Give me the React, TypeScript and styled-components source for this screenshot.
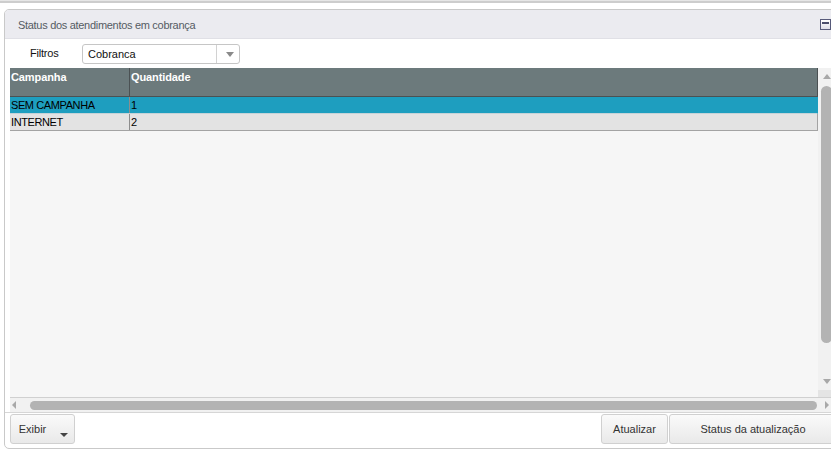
import React from 'react';
import styled, { createGlobalStyle } from 'styled-components';

interface RowData {
  campanha: string;
  quantidade: number;
}

const rows: RowData[] = [
  { campanha: 'SEM CAMPANHA', quantidade: 1 },
  { campanha: 'INTERNET', quantidade: 2 },
];

const GlobalStyle = createGlobalStyle`
  html, body {
    margin: 0;
    padding: 0;
    background: #ffffff;
  }
  body {
    font-family: "Liberation Sans", Arial, sans-serif;
    font-size: 11px;
    color: #222;
  }
`;

const App: React.FunctionComponent = () => {
  return (
    <Page>
      <GlobalStyle />
      <TopStrip />
      <Panel>
        <PanelHeader>
          <PanelTitle>Status dos atendimentos em cobrança</PanelTitle>
          <MinimizeButton>
            <MinimizeBar />
          </MinimizeButton>
        </PanelHeader>

        <FilterRow>
          <FilterLabel>Filtros</FilterLabel>
          <SelectBox>
            <SelectValue>Cobranca</SelectValue>
            <SelectArrow>
              <Triangle direction="down" color="#8a8a8a" />
            </SelectArrow>
          </SelectBox>
        </FilterRow>

        <GridArea>
          <TableArea>
            <HeaderRow>
              <HeaderCell>Campanha</HeaderCell>
              <HeaderCell>Quantidade</HeaderCell>
            </HeaderRow>
            {rows.map((row, i) => (
              <DataRow key={row.campanha} selected={i === 0}>
                <DataCell>{row.campanha}</DataCell>
                <DataCell>{row.quantidade}</DataCell>
              </DataRow>
            ))}
          </TableArea>

          <VScroll>
            <ArrowBox>
              <Triangle direction="up" color="#a8a8a8" />
            </ArrowBox>
            <VTrack>
              <VThumb />
            </VTrack>
            <ArrowBox>
              <Triangle direction="down" color="#a8a8a8" />
            </ArrowBox>
            <ScrollCorner />
          </VScroll>

          <HScroll>
            <HArrowBox>
              <Triangle direction="left" color="#a8a8a8" />
            </HArrowBox>
            <HTrack>
              <HThumb />
            </HTrack>
            <HArrowBox>
              <Triangle direction="right" color="#a8a8a8" />
            </HArrowBox>
          </HScroll>
        </GridArea>

        <ButtonBar>
          <ToolButton width={65}>
            <ButtonText>Exibir</ButtonText>
            <CaretWrap>
              <Triangle direction="down" color="#444" />
            </CaretWrap>
          </ToolButton>
          <Spacer />
          <ToolButton width={67}>Atualizar</ToolButton>
          <ToolButton width={168}>Status da atualização</ToolButton>
        </ButtonBar>
      </Panel>
    </Page>
  );
};

const Page = styled.div`
  width: 831px;
  height: 454px;
  overflow: hidden;
`;

const TopStrip = styled.div`
  height: 3px;
  box-sizing: border-box;
  border-top: 1px solid #e6e6e6;
  background: #cdcdcd;
`;

const Panel = styled.div`
  margin: 6px 0 0 4px;
  width: 840px;
  height: 440px;
  box-sizing: border-box;
  border: 1px solid #c9c9c9;
  border-radius: 5px;
  display: flex;
  flex-direction: column;
  overflow: hidden;
`;

const PanelHeader = styled.div`
  height: 29px;
  box-sizing: border-box;
  display: flex;
  align-items: center;
  padding: 0 12px 0 13px;
  background: #ebebf0;
  border-bottom: 1px solid #e0e0e6;
`;

const PanelTitle = styled.div`
  flex: 1;
  color: #555b63;
  font-size: 11px;
  letter-spacing: -0.3px;
  padding-top: 1px;
`;

const MinimizeButton = styled.div`
  width: 11px;
  height: 11px;
  box-sizing: border-box;
  border: 1px solid #575a7a;
  background: linear-gradient(#ffffff, #dedee8);
  padding: 2px 1px 0;
  margin-top: 1px;
`;

const MinimizeBar = styled.div`
  height: 2px;
  background: #4a4d6c;
`;

const FilterRow = styled.div`
  height: 29px;
  box-sizing: border-box;
  display: flex;
  align-items: flex-start;
  padding: 5px 0 0 25px;
`;

const FilterLabel = styled.div`
  width: 52px;
  line-height: 19px;
  color: #111;
  letter-spacing: -0.2px;
`;

const SelectBox = styled.div`
  width: 158px;
  height: 20px;
  box-sizing: border-box;
  border: 1px solid #c6c6c6;
  border-radius: 3px;
  display: flex;
  background: #fff;
`;

const SelectValue = styled.div`
  flex: 1;
  padding-left: 5px;
  line-height: 18px;
  color: #111;
`;

const SelectArrow = styled.div`
  width: 23px;
  border-left: 1px solid #d2d2d2;
  display: flex;
  align-items: center;
  justify-content: center;
  padding-left: 3px;
  box-sizing: border-box;
`;

const GridArea = styled.div`
  margin-left: 5px;
  width: 825px;
  height: 344px;
  display: grid;
  grid-template-columns: 808px 17px;
  grid-template-rows: 329px 15px;
`;

const TableArea = styled.div`
  background: #f6f6f6;
  display: flex;
  flex-direction: column;
`;

const HeaderRow = styled.div`
  height: 29px;
  box-sizing: border-box;
  display: grid;
  grid-template-columns: 119px 1fr;
  background: #6c7a7c;
  border-bottom: 1px solid #4b5153;
  border-right: 1px solid #4b5153;
`;

const HeaderCell = styled.div`
  color: #ffffff;
  font-weight: bold;
  padding: 2px 1px 0;
  line-height: 14px;
  letter-spacing: -0.1px;
  & + & {
    border-left: 1px solid #4b5153;
  }
`;

const DataRow = styled.div<{ selected?: boolean }>`
  height: 17px;
  box-sizing: border-box;
  display: grid;
  grid-template-columns: 119px 1fr;
  background: ${(p) => (p.selected ? '#1e9ebf' : '#e3e3e3')};
  border-bottom: 1px solid ${(p) => (p.selected ? '#c5d3d8' : '#a3a3a3')};
  border-right: 1px solid ${(p) => (p.selected ? '#1e9ebf' : '#a3a3a3')};
`;

const DataCell = styled.div`
  color: #000;
  padding: 2px 1px 0;
  line-height: 13px;
  letter-spacing: -0.4px;
  & + & {
    border-left: 1px solid #8d8d8d;
  }
`;

const VScroll = styled.div`
  display: flex;
  flex-direction: column;
  background: #f1f1f1;
`;

const ArrowBox = styled.div`
  height: 17px;
  display: flex;
  align-items: center;
  justify-content: center;
`;

const VTrack = styled.div`
  flex: 1;
  padding: 1px 3px 0;
`;

const VThumb = styled.div`
  height: 257px;
  border-radius: 6px;
  background: #b3b3b3;
`;

const ScrollCorner = styled.div`
  height: 7px;
  background: #e4e4e4;
`;

const HScroll = styled.div`
  grid-column: 1 / span 2;
  border-top: 1px solid #d0d0d0;
  background: #f1f1f1;
  display: flex;
  align-items: center;
`;

const HArrowBox = styled.div`
  width: 17px;
  display: flex;
  align-items: center;
  justify-content: center;
  &:first-child {
    width: 14px;
    padding-left: 2px;
    justify-content: flex-start;
  }
`;

const HTrack = styled.div`
  flex: 1;
  padding: 0 1px 0 4px;
`;

const HThumb = styled.div`
  height: 9px;
  border-radius: 5px;
  background: #b3b3b3;
`;

const Triangle = styled.div<{ direction: 'up' | 'down' | 'left' | 'right'; color: string }>`
  width: 0;
  height: 0;
  border-style: solid;
  ${(p) =>
    p.direction === 'down'
      ? `border-width: 5px 4px 0 4px; border-color: ${p.color} transparent transparent transparent;`
      : p.direction === 'up'
      ? `border-width: 0 4px 5px 4px; border-color: transparent transparent ${p.color} transparent;`
      : p.direction === 'left'
      ? `border-width: 4px 4px 4px 0; border-color: transparent ${p.color} transparent transparent;`
      : `border-width: 4px 0 4px 4px; border-color: transparent transparent transparent ${p.color};`}
`;

const ButtonBar = styled.div`
  flex: 1;
  border-top: 1px solid #d6d6d6;
  padding: 1px 6px 0 5px;
  display: flex;
  align-items: flex-start;
`;

const Spacer = styled.div`
  flex: 1;
`;

const ToolButton = styled.div<{ width: number }>`
  width: ${(p) => p.width}px;
  height: 30px;
  box-sizing: border-box;
  border: 1px solid #d0d0d0;
  border-radius: 3px;
  background: linear-gradient(#fafafa, #e9e9e9);
  display: flex;
  align-items: center;
  justify-content: center;
  color: #333;
  font-size: 11px;
  & + & {
    margin-left: 1px;
  }
`;

const ButtonText = styled.span`
  margin-left: 2px;
`;

const CaretWrap = styled.div`
  margin: 12px 0 0 14px;
  & > div {
    border-width: 4px 4px 0 4px;
  }
`;

export default App;
